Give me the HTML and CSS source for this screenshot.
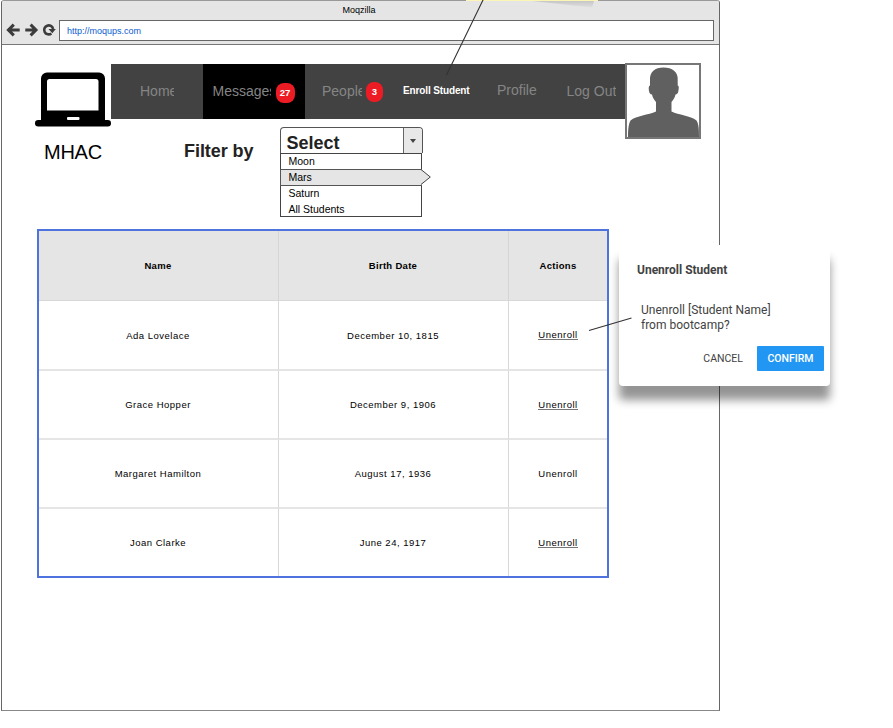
FILE: index.html
```html
<!DOCTYPE html>
<html lang="en">
<head>
<meta charset="utf-8">
<title>Moqzilla</title>
<link rel="stylesheet" href="styles.css">
</head>
<body>
<div class="window">
  <header class="chrome">
    <div class="chrome-title">Moqzilla</div>
    <div class="chrome-bar">
      <svg class="chrome-icons" width="56" height="20" viewBox="0 0 56 20">
        <path d="M11.300 4.600 5.900 10l5.400 5.400M6.500 10h10.700" fill="none" stroke="#3c3c3c" stroke-width="3"/>
        <path d="M28.100 4.600 33.500 10l-5.400 5.400M33 10H22.800" fill="none" stroke="#3c3c3c" stroke-width="3"/>
        <path d="M48.900 13.500A4.500 4.500 0 1 1 50.600 9" fill="none" stroke="#3c3c3c" stroke-width="2.600"/>
        <path d="M46 9h7.300l-3.500 4.200z" fill="#3c3c3c"/>
      </svg>
      <div class="address">http://moqups.com</div>
    </div>
  </header>
  <main class="page">
    <div class="top">
      <div class="brand">
        <svg width="76" height="64" viewBox="0 0 76 64">
          <path fill-rule="evenodd" d="M12 9.500h52a6 6 0 0 1 6 6V57H6V15.500a6 6 0 0 1 6-6zM14.500 16a2.500 2.500 0 0 0-2.500 2.500V47.500H63.500V18.500a2.500 2.500 0 0 0-2.500-2.500z"/>
          <rect x="0" y="57" width="76" height="6.500" rx="3.200"/>
          <rect x="32" y="54" width="12.500" height="3" rx="1" fill="#fff"/>
        </svg>
        <div class="brand-name">MHAC</div>
      </div>
      <div class="center">
        <nav class="nav">
          <div class="nav-item home"><span>Home</span></div>
          <div class="nav-item messages"><span>Messages</span><b class="badge">27</b></div>
          <div class="nav-item people"><span>People</span><b class="badge small">3</b></div>
          <div class="nav-item enroll"><span>Enroll Student</span></div>
          <div class="nav-item profile"><span>Profile</span></div>
          <div class="nav-item logout"><span>Log Out</span></div>
        </nav>
        <div class="filter">
          <div class="filter-label">Filter by</div>
          <div class="select">
            <div class="select-head"><span>Select</span><i class="select-arrow"></i></div>
            <div class="options">
              <div class="option">Moon</div>
              <div class="option active">Mars
                <svg class="pointer" width="11" height="18" viewBox="0 0 11 18"><path d="M0 1.500 9.300 9 0 16.500z" fill="#e5e5e5"/><path d="M0 1.500 9.300 9 0 16.500" fill="none" stroke="#444"/></svg>
              </div>
              <div class="option">Saturn</div>
              <div class="option">All Students</div>
            </div>
          </div>
        </div>
      </div>
      <div class="avatar">
        <svg width="72" height="72" viewBox="0 0 72 72">
          <path fill="#606060" d="M36.500 2.500C45 2.500 51.500 7 50.700 15v5.500c1.700.5 1 3.500.7 5.500-.3 2-1.500 3.500-2.900 3.500-.7 3-2 5.300-4 7.500v9.500c7 3.500 19 4 25 9 2.500 4 2.500 10 2.500 16.500H1C1 65 1.500 59 3.500 55.500c6-5 18-5.500 25.500-9V37c-2-2.200-3.300-4.500-4-7.500-1.800 0-2.600-1.500-3-3.500-.3-2-.7-5 1-5.500V15C22.500 7 28 2.500 36.500 2.500z"/>
        </svg>
      </div>
    </div>
    <div class="table">
      <div class="row head"><div>Name</div><div>Birth Date</div><div>Actions</div></div>
      <div class="row"><div>Ada Lovelace</div><div>December 10, 1815</div><div><a>Unenroll</a></div></div>
      <div class="row"><div>Grace Hopper</div><div>December 9, 1906</div><div><a>Unenroll</a></div></div>
      <div class="row"><div>Margaret Hamilton</div><div>August 17, 1936</div><div>Unenroll</div></div>
      <div class="row"><div>Joan Clarke</div><div>June 24, 1917</div><div><a>Unenroll</a></div></div>
    </div>
  </main>
</div>
<div class="note"></div>
<section class="dialog">
  <h2>Unenroll Student</h2>
  <p>Unenroll [Student Name]<br>from bootcamp?</p>
  <div class="buttons"><span class="cancel">CANCEL</span><span class="confirm">CONFIRM</span></div>
</section>
<svg class="callouts" width="893" height="728" viewBox="0 0 893 728">
  <path d="M483.500-1 446.500 75M589 330.500 631.500 318" fill="none" stroke="#333" stroke-width="1.100"/>
</svg>
</body>
</html>
```
FILE: styles.css
```css
* { box-sizing: border-box; }
body {
  margin: 0;
  position: relative;
  height: 728px;
  overflow: hidden;
  background: #fff;
  color: #000;
  font-family: "Liberation Sans", Arial, sans-serif;
}
svg { display: block; }
.window {
  width: 719px;
  height: 711px;
  margin-left: 1px;
  border: 1px solid #666;
  border-top-color: #999;
  border-bottom-color: #888;
  border-radius: 3px 3px 0 0;
  overflow: hidden;
}
.chrome {
  height: 44px;
  background: #e5e5e5;
  border-bottom: 1px solid #777;
}
.chrome-title {
  height: 19px;
  padding: 4px 3px 0 0;
  text-align: center;
  font-size: 9px;
  line-height: 11px;
}
.chrome-bar { display: flex; padding-right: 5px; }
.chrome-icons { flex: none; width: 57px; }
.address {
  flex: 1;
  height: 21px;
  padding-left: 7px;
  border: 1px solid #666;
  background: #fff;
  color: #0b5bd0;
  font-size: 9px;
  line-height: 20px;
}
.page { padding: 18px 0 0 33px; }
.top { display: flex; height: 166px; }
.brand { width: 76px; }
.brand-name {
  padding: 13px 0 0 9px;
  font-size: 20px;
  line-height: 24px;
  letter-spacing: -0.250px;
}
.center { width: 514px; padding-top: 1px; }
.nav {
  display: flex;
  height: 55px;
  background: #424242;
  color: #858585;
  font-size: 14px;
}
.nav-item { display: flex; align-items: center; flex: none; padding-bottom: 2px; }
.nav-item span { overflow: hidden; white-space: nowrap; line-height: 20px; }
.home { width: 91.500px; padding-left: 29px; }
.home span { width: 34px; }
.messages { width: 102.500px; padding-left: 10px; background: #000; }
.messages span { width: 58px; }
.people { width: 98px; padding-left: 17px; }
.people span { width: 40px; }
.enroll { width: 94px; padding-bottom: 1px; color: #fff; font-size: 10px; font-weight: bold; }
.enroll span { letter-spacing: -0.130px; }
.profile { width: 69.500px; padding: 0 0 3px; }
.logout span { width: 49px; }
.badge {
  width: 19px;
  height: 20px;
  margin: 4px 0 0 5px;
  border-radius: 8px;
  background: #ed1c24;
  color: #fff;
  font-size: 9.500px;
  line-height: 20px;
  text-align: center;
}
.badge.small { width: 17px; margin: 3px 0 0 4px; }
.filter { display: flex; padding: 8px 0 0 73px; }
.filter-label {
  width: 95.500px;
  padding-top: 13px;
  color: #222;
  font-size: 18px;
  font-weight: bold;
  line-height: 22px;
  letter-spacing: -0.060px;
}
.select { width: 143px; }
.select-head {
  display: flex;
  justify-content: space-between;
  height: 26px;
  border: 1px solid #555;
  border-bottom: 0;
  border-radius: 4px 4px 0 0;
  overflow: hidden;
  color: #222;
  font-size: 18px;
  font-weight: bold;
  line-height: 30px;
  padding-left: 6px;
}
.select-arrow {
  width: 19px;
  height: 26px;
  padding: 11px 0 0 6px;
  border-left: 1px solid #666;
  background: #e8e8e8;
}
.select-arrow::before {
  content: "";
  display: block;
  width: 0;
  border: 3px solid transparent;
  border-top: 4px solid #444;
  border-bottom: 0;
}
.options {
  width: 142px;
  height: 64px;
  border: 1px solid #444;
  font-size: 10.500px;
}
.option { height: 15.500px; padding-left: 8px; line-height: 16px; }
.option:first-child { height: 15px; line-height: 15px; }
.option.active {
  position: relative;
  height: 17px;
  margin: 0 -1px;
  border: 1px solid #555;
  border-right: 0;
  background: #e5e5e5;
  line-height: 15px;
}
.option.active + .option { height: 15px; line-height: 14px; }
.pointer { position: absolute; left: 140px; top: -2px; }
.avatar {
  width: 76px;
  height: 76px;
  border: 2px solid #777;
}
.table {
  width: 572px;
  margin-left: 2px;
  border: 2px solid #4e73de;
  font-size: 9.500px;
  letter-spacing: 0.500px;
}
.row { display: grid; grid-template-columns: 240px 230px 1fr; height: 69px; }
.row:nth-child(-n+2) { height: 70px; }
.row > div {
  display: flex;
  align-items: center;
  justify-content: center;
  padding-right: 1px;
  border-right: 1px solid #d8d8d8;
  border-bottom: 2px solid #e5e5e5;
}
.row > div:last-child { border-right: 0; padding-right: 0; }
.row:last-child { height: 67px; }
.row:last-child > div { border-bottom: 0; }
.head { background: #e5e5e5; font-weight: bold; letter-spacing: 0.300px; }
.row.head > div { border-right-color: #d5d5d5; border-bottom: 1px solid #d8d8d8; padding-bottom: 1px; }
.row a { border-bottom: 1px solid #777; line-height: 9px; }
.note {
  position: absolute;
  top: 0;
  left: 466px;
  width: 132px;
  height: 1px;
  background: #fdf5b5;
}
.note::after {
  content: "";
  position: absolute;
  top: 1px;
  left: 66px;
  width: 62px;
  height: 8px;
  background: linear-gradient(#c6c6c6, #e5e5e500);
  clip-path: polygon(0 0, 100% 0, 97% 80%);
}
.dialog {
  position: absolute;
  left: 619px;
  top: 245px;
  width: 211px;
  height: 141px;
  padding: 17px 6px 0 18px;
  border-radius: 4px;
  background: #fff;
  box-shadow: 0 14px 10px 0 rgba(0,0,0,.42);
  color: #424242;
  font-family: Roboto, sans-serif;
}
.dialog h2 { margin: 0; font-size: 12px; line-height: 16px; font-weight: 700; }
.dialog p { margin: 25px 0 0 4px; font-size: 12px; line-height: 15px; }
.buttons {
  display: flex;
  align-items: center;
  justify-content: flex-end;
  gap: 14px;
  margin-top: 12px;
  font-size: 10.500px;
  line-height: 25px;
}
.cancel { padding-top: 1px; }
.confirm {
  width: 67px;
  height: 25px;
  border-radius: 1px;
  background: #2196f3;
  color: #fff;
  font-weight: 500;
  text-align: center;
}
.callouts { position: absolute; left: 0; top: 0; pointer-events: none; }
```
